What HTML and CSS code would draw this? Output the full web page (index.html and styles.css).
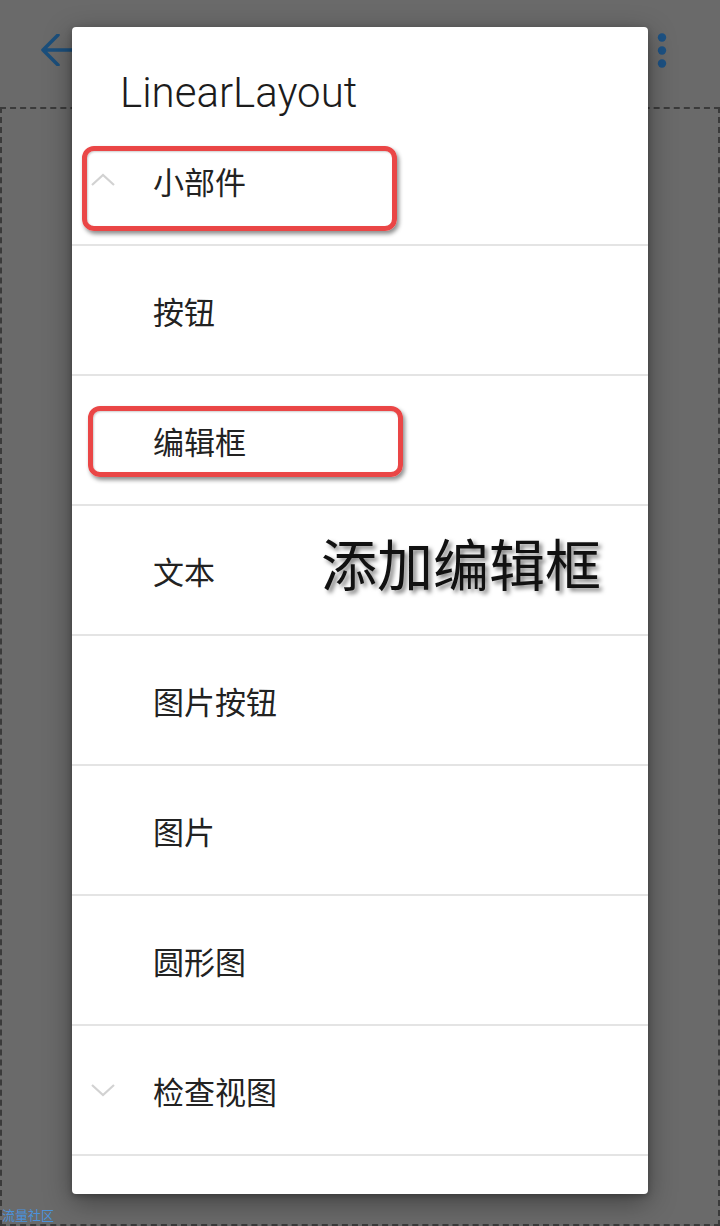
FILE: index.html
```html
<!DOCTYPE html>
<html lang="zh-CN">
<head>
  <meta charset="UTF-8">
  <title>LinearLayout</title>
  <meta name="viewport" content="width=device-width, initial-scale=1">
  <link rel="stylesheet" href="styles.css">
</head>
<body>
  <div class="screen">
    <div class="toolbar">
      <svg class="back" width="36" height="32" viewBox="0 0 36 32">
        <path d="M19 1 L4 16 L19 31 M4 16 L36 16" fill="none" stroke="#1b4f7c" stroke-width="3.5" stroke-linecap="round" stroke-linejoin="round"/>
      </svg>
      <svg class="more" width="14" height="40" viewBox="0 0 14 40">
        <circle cx="7" cy="7.5" r="4.2" fill="#1d5284"/>
        <circle cx="7" cy="20.5" r="4.2" fill="#1d5284"/>
        <circle cx="7" cy="33.5" r="4.2" fill="#1d5284"/>
      </svg>
    </div>
    <div class="stage"></div>

    <div class="dialog">
      <div class="dialog-title">LinearLayout</div>
      <ul class="list">
        <li class="row">
          <svg class="chev" width="26" height="16" viewBox="0 0 26 16"><path d="M2 13 L13 3 L24 13" fill="none" stroke="#d2d2d2" stroke-width="2.2"/></svg>
          <span>小部件</span>
          <div class="mark mark-one"></div>
        </li>
        <li class="row"><span>按钮</span></li>
        <li class="row">
          <span>编辑框</span>
          <div class="mark mark-two"></div>
        </li>
        <li class="row">
          <span>文本</span>
          <div class="note">添加编辑框</div>
        </li>
        <li class="row"><span>图片按钮</span></li>
        <li class="row"><span>图片</span></li>
        <li class="row"><span>圆形图</span></li>
        <li class="row">
          <svg class="chev" width="26" height="16" viewBox="0 0 26 16"><path d="M2 3 L13 13 L24 3" fill="none" stroke="#d2d2d2" stroke-width="2.2"/></svg>
          <span>检查视图</span>
        </li>
      </ul>
    </div>

    <div class="watermark">流量社区</div>
  </div>
</body>
</html>
```

FILE: styles.css
```css
html, body { margin: 0; padding: 0; background: #6a6a6a; }
body { font-family: "Noto Sans CJK SC", "Noto Sans", sans-serif; }
.screen { position: relative; width: 720px; height: 1226px; overflow: hidden; background: #6a6a6a; }

.toolbar { height: 107px; display: flex; justify-content: space-between; align-items: flex-start; padding: 0 51px 0 39px; box-sizing: border-box; }
.toolbar .back { margin-top: 34px; }
.toolbar .more { margin-top: 30px; }
.stage { height: 1119px; border: 2px dashed #3a3a3a; box-sizing: border-box; }

.dialog {
  position: absolute;
  top: 27px;
  left: 72px;
  width: 576px;
  height: 1167px;
  background: #fff;
  border-radius: 4px;
  box-shadow: 0 8px 28px rgba(0,0,0,0.38), 0 2px 6px rgba(0,0,0,0.25);
}
.dialog-title {
  height: 89px;
  padding: 41px 0 0 48px;
  box-sizing: border-box;
  font-family: Roboto, "Liberation Sans", sans-serif;
  font-size: 42px;
  font-weight: 300;
  line-height: 50px;
  color: #1c1c1c;
}
.list { list-style: none; margin: 0; padding: 0; }
.row {
  position: relative;
  height: 130px;
  display: flex;
  align-items: center;
  padding-left: 81px;
  border-bottom: 2px solid #e4e4e4;
  box-sizing: border-box;
  font-size: 31px;
  color: #222;
}
.row .chev { position: absolute; left: 18px; top: 56px; }

.mark {
  position: absolute;
  border: 5px solid #ea4646;
  border-radius: 12px;
  box-shadow: 2px 3px 4px rgba(0,0,0,0.45), inset 1px 1px 2px rgba(0,0,0,0.2);
  box-sizing: border-box;
}
.mark-one { left: 10px; top: 30px; width: 315px; height: 85px; }
.mark-two { left: 16px; top: 30px; width: 315px; height: 71px; }

.note {
  position: absolute;
  left: 249px;
  top: 24px;
  font-size: 56px;
  line-height: 64px;
  color: #111;
  text-shadow: 3px 3px 4px rgba(0,0,0,0.5);
}

.watermark {
  position: absolute;
  left: 2px;
  bottom: 3px;
  font-size: 13px;
  line-height: 16px;
  color: #4b92da;
}
```
